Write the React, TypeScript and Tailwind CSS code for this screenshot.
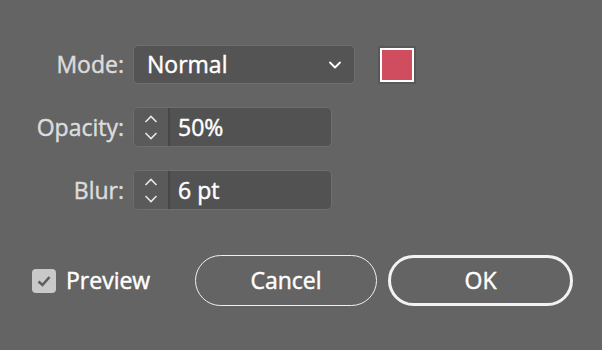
import { ChevronDown } from "lucide-react";

const font = { fontFamily: '"Open Sans", "Liberation Sans", sans-serif' };

// Open Sans has no 500 weight here, so a thin stroke thickens the regular face
const medium = "[-webkit-text-stroke:0.45px_currentColor]";

function Spinner() {
  return (
    <div className="flex h-full w-[36px] shrink-0 flex-col items-center justify-center gap-[9px] border-r-2 border-[#474747] bg-[#5a5a5a]">
      <svg width="14" height="8" viewBox="0 0 14 8" fill="none">
        <path d="M1.5 7 L7 1.5 L12.5 7" stroke="#e6e6e6" strokeWidth="1.6" />
      </svg>
      <svg width="14" height="8" viewBox="0 0 14 8" fill="none">
        <path d="M1.5 1 L7 6.5 L12.5 1" stroke="#e6e6e6" strokeWidth="1.6" />
      </svg>
    </div>
  );
}

function NumberField({ value }: { value: string }) {
  return (
    <div className="flex h-[40px] w-[199px] items-center overflow-hidden rounded-[5px] border border-[#6e6e6e] bg-[#525252]">
      <Spinner />
      <span className={`pl-[8px] text-[23px] text-white ${medium}`}>{value}</span>
    </div>
  );
}

export default function App() {
  return (
    <div
      className="flex h-[350px] w-[602px] flex-col bg-[#646464] pt-[45px]"
      style={font}
    >
      <div className="grid grid-cols-[124px_auto] items-center gap-x-[9px] gap-y-[23px]">
        <span className={`text-right text-[23px] text-[#dcdcdc] ${medium}`}>Mode:</span>
        <div className="flex items-center">
          <div className="flex h-[39px] w-[222px] items-center justify-between rounded-[5px] border border-[#6e6e6e] bg-[#545454] pl-[13px] pr-[9px]">
            <span className={`text-[23px] text-white ${medium}`}>Normal</span>
            <ChevronDown size={20} strokeWidth={2.2} className="text-white" />
          </div>
          <div className="ml-[23px] h-[38px] w-[38px] border-2 border-[#585858] bg-white p-[2px]">
            <div className="h-full w-full bg-[#d04c5f]" />
          </div>
        </div>

        <span className={`text-right text-[23px] text-[#dcdcdc] ${medium}`}>Opacity:</span>
        <NumberField value="50%" />

        <span className={`text-right text-[23px] text-[#dcdcdc] ${medium}`}>Blur:</span>
        <NumberField value="6 pt" />
      </div>

      <div className="mt-[45px] flex items-center pl-[32px]">
        <div className="flex w-[163px] items-center">
          <div className="flex h-[24px] w-[24px] items-center justify-center rounded-[4px] bg-[#c9c9c9]">
            <svg width="16" height="14" viewBox="0 0 16 14" fill="none">
              <path d="M2.5 7.5 L6.5 11 L13.5 3" stroke="#5e5e5e" strokeWidth="2.6" />
            </svg>
          </div>
          <span className={`ml-[10px] text-[23px] text-white ${medium}`}>Preview</span>
        </div>
        <button className={`h-[51px] w-[182px] rounded-full border-[1.5px] border-[#f0f0f0] text-[23px] text-white ${medium}`}>
          Cancel
        </button>
        <button className={`ml-[11px] h-[51px] w-[185px] rounded-full border-[3px] border-[#f2f2f2] text-[23px] text-white ${medium}`}>
          OK
        </button>
      </div>
    </div>
  );
}
